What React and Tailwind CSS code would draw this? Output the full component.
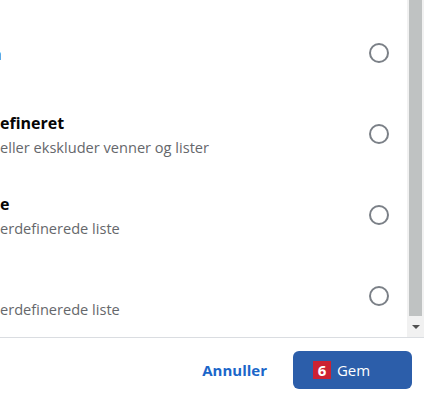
import React from "react";

const rows = [
  { title: "n", shift: "ml-[-9px]", sub: null },
  { title: "efineret", shift: "", sub: "eller ekskluder venner og lister" },
  { title: "e", shift: "", sub: "erdefinerede liste" },
  { title: "", shift: "", sub: "erdefinerede liste" },
];

function Radio() {
  return <div className="w-5 h-5 rounded-full border-2 border-[#7b8087] bg-white shrink-0" />;
}

export default function App() {
  return (
    <div className="w-[424px] h-[398px] bg-white overflow-hidden flex flex-col font-['Open_Sans',sans-serif]">
      {/* Scroll area */}
      <div className="flex h-[337px]">
        <div className="flex-1 overflow-hidden pt-[12px]">
          {rows.map((row, i) => (
            <div key={i} className="h-[81px] flex items-center pr-[18px]">
              <div className={`pt-[3px] whitespace-nowrap ${row.shift}`}>
                <div className="text-[16px] font-bold leading-[24px] text-[#050505] h-[24px]">{row.title}</div>
                {row.sub && (
                  <div className="text-[14.6px] leading-[24px] text-[#65676b]">{row.sub}</div>
                )}
              </div>
              <div className="flex-1" />
              <Radio />
            </div>
          ))}
        </div>

        {/* Scrollbar */}
        <div className="w-[17px] bg-[#f1f1f1] flex flex-col">
          <div className="mx-[2px] h-[316px] bg-[#bfc2c2]" />
          <div className="flex-1 flex items-center justify-center">
            <div className="w-0 h-0 border-l-[4px] border-r-[4px] border-t-[4px] border-l-transparent border-r-transparent border-t-[#505050]" />
          </div>
        </div>
      </div>

      {/* Footer */}
      <div className="flex-1 border-t border-[#dadde1] flex items-center justify-end pt-[4px] pr-[12px] gap-[14px]">
        <button className="px-[12px] h-[38px] text-[15px] font-bold text-[#1b66c9]">Annuller</button>
        <button className="relative w-[119px] h-[38px] rounded-[6px] bg-[#2c5eaa] text-white text-[15px] flex items-center justify-center">
          <span className="absolute left-[20px] top-[10px] w-[18px] h-[18px] bg-[#cc2233] text-white text-[15px] font-bold leading-[18px] text-center">
            6
          </span>
          <span className="pl-[2px]">Gem</span>
        </button>
      </div>
    </div>
  );
}
